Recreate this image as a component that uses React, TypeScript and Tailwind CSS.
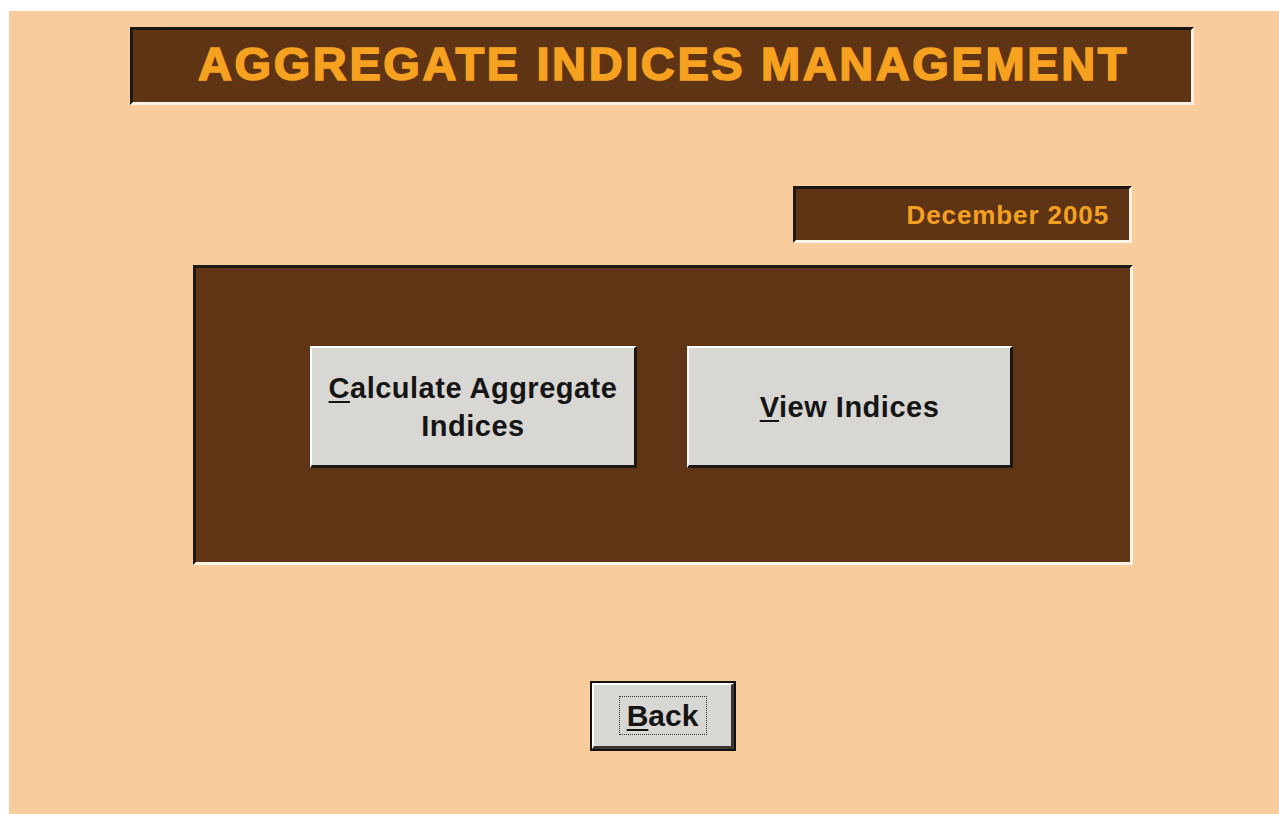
import React from "react";

export default function App() {
  const font = { fontFamily: '"Liberation Sans", Arial, sans-serif' };
  return (
    <div className="w-[1279px] h-[814px] bg-white pt-[11px] pl-[9px] flex overflow-hidden" style={font}>
      <div className="flex-1 bg-[#f9cc9d] flex flex-col items-start">
        {/* Title */}
        <div className="mt-[16px] ml-[121px] w-[1064px] h-[78px] bg-[#5f3415] border-t-[3px] border-l-[3px] border-t-[#1c1814] border-l-[#1c1814] border-b-[3px] border-r-[3px] border-b-[#fbf3e6] border-r-[#fbf3e6] flex items-center justify-center">
          <span className="text-[47px] font-bold leading-none text-[#f6a11f] tracking-[2.6px] [-webkit-text-stroke:1.6px_#f6a11f] pl-[3px] pb-[6px]">
            AGGREGATE INDICES MANAGEMENT
          </span>
        </div>

        {/* Date */}
        <div className="mt-[81px] ml-[784px] w-[339px] h-[57px] bg-[#5f3415] border-t-[3px] border-l-[3px] border-t-[#1c1814] border-l-[#1c1814] border-b-[3px] border-r-[3px] border-b-[#fbf3e6] border-r-[#fbf3e6] flex items-center justify-end pr-[20px]">
          <span className="text-[26px] font-bold leading-none text-[#f4a021] tracking-[0.9px]">December 2005</span>
        </div>

        {/* Panel */}
        <div className="mt-[22px] ml-[184px] w-[940px] h-[300px] bg-[#603516] border-t-[3px] border-l-[3px] border-t-[#1c1814] border-l-[#1c1814] border-b-[3px] border-r-[3px] border-b-[#fbf3e6] border-r-[#fbf3e6] flex justify-center items-start pt-[78px] gap-[50px] pr-[3px]">
          <button className="w-[327px] h-[122px] bg-[#d9d7d3] border-t-2 border-l-2 border-t-white border-l-white border-b-[3px] border-r-[3px] border-b-[#1a1714] border-r-[#1a1714] flex flex-col items-center justify-center text-[29px] font-bold leading-[38px] text-[#151515] tracking-[0.5px]">
            <span><span className="underline underline-offset-[3px] decoration-2">C</span>alculate Aggregate</span>
            <span>Indices</span>
          </button>
          <button className="w-[326px] h-[122px] bg-[#d9d7d3] border-t-2 border-l-2 border-t-white border-l-white border-b-[3px] border-r-[3px] border-b-[#1a1714] border-r-[#1a1714] flex items-center justify-center text-[29px] font-bold leading-none text-[#151515] tracking-[0.5px] pt-[2px]">
            <span><span className="underline underline-offset-[3px] decoration-2">V</span>iew Indices</span>
          </button>
        </div>

        {/* Back */}
        <div className="mt-[116px] ml-[581px] w-[146px] h-[70px] border-2 border-[#111] flex">
          <div className="flex-1 bg-[#d9d7d3] border-t-2 border-l-2 border-t-white border-l-white border-b-[3px] border-r-[3px] border-b-[#3a3632] border-r-[#3a3632] flex items-center justify-center">
            <div className="border border-dotted border-[#333] w-[88px] h-[39px] flex items-center justify-center">
              <span className="text-[30px] font-bold leading-none text-[#151515]">
                <span className="underline underline-offset-[3px] decoration-2">B</span>ack
              </span>
            </div>
          </div>
        </div>
      </div>
    </div>
  );
}
